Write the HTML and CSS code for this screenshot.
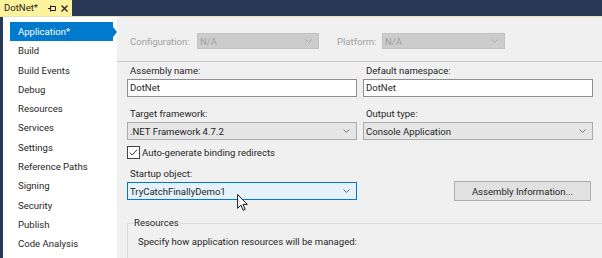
FILE: index.html
```html
<!DOCTYPE html>
<html>
<head>
<meta charset="utf-8">
<title>DotNet - Application</title>
<link rel="stylesheet" href="styles.css">
</head>
<body>
<div class="window">
  <div class="tabstrip">
    <div class="tab">
      <span class="tab-title">DotNet*</span>
      <svg class="pin" width="8" height="7" viewBox="0 0 8 7"><path d="M0 3.5H2.5M2.5 0.5V6.5M2.5 1.5H7.5V5.5H2.5" fill="none" stroke="#1e1e1e" stroke-width="1"/></svg>
      <svg class="close" width="7" height="7" viewBox="0 0 7 7"><path d="M0.5 0.5L6.5 6.5M6.5 0.5L0.5 6.5" stroke="#1e1e1e" stroke-width="1.2"/></svg>
    </div>
  </div>
  <div class="tabline"></div>
  <div class="main">
    <nav class="nav">
      <div class="nav-item selected">Application*</div>
      <div class="nav-item">Build</div>
      <div class="nav-item">Build Events</div>
      <div class="nav-item">Debug</div>
      <div class="nav-item">Resources</div>
      <div class="nav-item">Services</div>
      <div class="nav-item">Settings</div>
      <div class="nav-item">Reference Paths</div>
      <div class="nav-item">Signing</div>
      <div class="nav-item">Security</div>
      <div class="nav-item">Publish</div>
      <div class="nav-item">Code Analysis</div>
    </nav>
    <section class="content">
      <div class="config-row">
        <span class="dim-label lbl-config">Configuration:</span>
        <div class="combo disabled combo-config"><span>N/A</span><svg class="chev" width="7" height="4" viewBox="0 0 7 4"><path d="M0.5 0.5L3.5 3.5L6.5 0.5" fill="none" stroke="#ababab"/></svg></div>
        <span class="dim-label lbl-platform">Platform:</span>
        <div class="combo disabled combo-platform"><span>N/A</span><svg class="chev" width="7" height="4" viewBox="0 0 7 4"><path d="M0.5 0.5L3.5 3.5L6.5 0.5" fill="none" stroke="#ababab"/></svg></div>
      </div>
      <div class="separator"></div>
      <div class="form">
        <div class="row row-1">
          <div class="field">
            <label class="field-label">Assembly name:</label>
            <div class="textbox">DotNet</div>
          </div>
          <div class="field">
            <label class="field-label">Default namespace:</label>
            <div class="textbox">DotNet</div>
          </div>
        </div>
        <div class="row row-2">
          <div class="field">
            <label class="field-label">Target framework:</label>
            <div class="combo"><span>.NET Framework 4.7.2</span><svg class="chev" width="7" height="4" viewBox="0 0 7 4"><path d="M0.5 0.5L3.5 3.5L6.5 0.5" fill="none" stroke="#7a7a7a"/></svg></div>
          </div>
          <div class="field">
            <label class="field-label">Output type:</label>
            <div class="combo"><span>Console Application</span><svg class="chev" width="7" height="4" viewBox="0 0 7 4"><path d="M0.5 0.5L3.5 3.5L6.5 0.5" fill="none" stroke="#7a7a7a"/></svg></div>
          </div>
        </div>
        <div class="check-row">
          <svg class="checkbox" width="13" height="13" viewBox="0 0 13 13"><rect x="0.5" y="0.5" width="12" height="12" fill="#fff" stroke="#444"/><path d="M2.8 6.6L5.2 9L10.2 3.6" fill="none" stroke="#333" stroke-width="1"/></svg>
          <span>Auto-generate binding redirects</span>
        </div>
        <div class="row row-4">
          <div class="field">
            <label class="field-label">Startup object:</label>
            <div class="combo hover"><span>TryCatchFinallyDemo1</span><svg class="chev" width="7" height="4" viewBox="0 0 7 4"><path d="M0.5 0.5L3.5 3.5L6.5 0.5" fill="none" stroke="#6a6a6a"/></svg></div>
          </div>
          <div class="field button-cell">
            <div class="button">Assembly Information...</div>
          </div>
        </div>
      </div>
      <fieldset class="group">
        <legend>Resources</legend>
        <p class="group-text">Specify how application resources will be managed:</p>
      </fieldset>
    </section>
  </div>
  <svg class="cursor" width="11" height="17" viewBox="0 0 12 19"><path d="M0.5 0.5V16L4.2 12.4L6.8 18.2L9 17.2L6.5 11.6H11.4Z" fill="#fff" stroke="#000" stroke-width="1"/></svg>
</div>
</body>
</html>
```

FILE: styles.css
```css
html, body {
  margin: 0;
  padding: 0;
}

body {
  background: #293955;
  font-family: Roboto, "Liberation Sans", sans-serif;
  font-size: 9.55px;
  color: #262626;
  overflow: hidden;
}

.window {
  position: relative;
  width: 602px;
  height: 258px;
  overflow: hidden;
}

.tabstrip {
  height: 16px;
  display: flex;
}

.tab {
  width: 72px;
  height: 16px;
  background: #fff29d;
  display: flex;
  align-items: center;
  padding-left: 4px;
  box-sizing: border-box;
}

.tab-title {
  line-height: 16px;
  color: #1e1e1e;
}

.pin {
  margin-left: 10px;
}

.close {
  margin-left: 5px;
}

.tabline {
  height: 1px;
  background: #e9e3b4;
}

.main {
  display: flex;
  height: 241px;
  padding-left: 3px;
}

.nav {
  width: 114px;
  flex: none;
  background: #ffffff;
  padding-top: 5px;
  box-sizing: border-box;
}

.nav-item {
  height: 19.3px;
  line-height: 19.3px;
  margin-left: 7px;
  width: 103px;
  padding-left: 8px;
  box-sizing: border-box;
  white-space: nowrap;
}

.nav-item.selected {
  position: relative;
  background: #007acc;
  color: #ffffff;
}

.nav-item.selected::after {
  content: "";
  position: absolute;
  right: -4px;
  top: 50%;
  margin-top: -5px;
  border-left: 4px solid #007acc;
  border-top: 5px solid transparent;
  border-bottom: 5px solid transparent;
}

.content {
  flex: 1;
  background: #f0f0f0;
  padding-top: 16px;
  min-width: 0;
}

.config-row {
  display: flex;
  align-items: center;
  height: 16px;
  padding-left: 13px;
}

.dim-label {
  color: #a0a0a0;
  white-space: nowrap;
}

.lbl-config {
  width: 67px;
}

.lbl-platform {
  width: 45px;
  margin-left: 18px;
}

.combo {
  height: 18px;
  border: 1px solid #acacac;
  background: #e5e5e5;
  box-sizing: border-box;
  display: flex;
  align-items: center;
  justify-content: space-between;
  padding-left: 2px;
  padding-right: 6px;
  white-space: nowrap;
}

.combo.disabled {
  height: 16px;
  background: #cccccc;
  border-color: #c2c2c2;
  color: #9e9e9e;
}

.combo-config {
  width: 122px;
}

.combo-platform {
  width: 123px;
}

.combo.hover {
  background: #e5f1fb;
  border-color: #0078d7;
}

.separator {
  margin-top: 12px;
  height: 1px;
  background: #c9c9c9;
}

.form {
  padding-left: 10px;
}

.row {
  display: flex;
  gap: 6px;
}

.row-1 {
  margin-top: 1px;
}

.row-2 {
  margin-top: 9px;
}

.row-4 {
  margin-top: 7px;
}

.field {
  width: 230px;
}

.field-label {
  display: block;
  height: 16px;
  line-height: 16px;
  padding-left: 3px;
  white-space: nowrap;
}

.textbox {
  height: 18px;
  border: 1px solid #8e8e8e;
  background: #ffffff;
  box-sizing: border-box;
  padding-left: 2px;
  line-height: 16px;
}

.check-row {
  margin-top: 6px;
  height: 13px;
  display: flex;
  align-items: center;
  gap: 2px;
}

.checkbox {
  flex: none;
}

.button-cell {
  padding-top: 15px;
}

.button {
  margin-left: 91px;
  width: 137px;
  height: 20px;
  box-sizing: border-box;
  border: 1px solid #adadad;
  background: #e1e1e1;
  display: flex;
  align-items: center;
  justify-content: center;
  white-space: nowrap;
}

.group {
  margin: 14px -20px 0 10px;
  border: 1px solid #dcdcdc;
  padding: 0 0 20px 10px;
  min-width: 0;
}

.group legend {
  margin-left: -5px;
  padding: 0 1px;
  line-height: 16px;
}

.group-text {
  margin: 0;
  padding-top: 3px;
  line-height: 16px;
  white-space: nowrap;
}

.cursor {
  position: absolute;
  left: 237px;
  top: 194px;
}
```
